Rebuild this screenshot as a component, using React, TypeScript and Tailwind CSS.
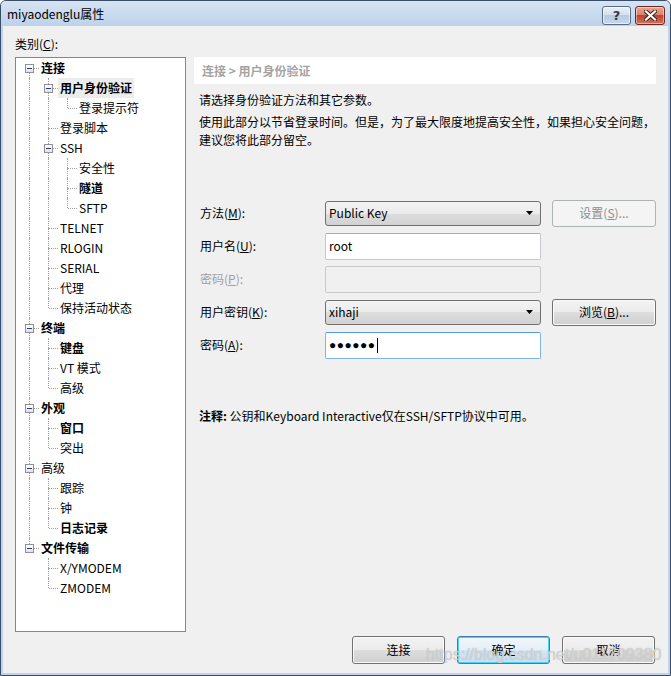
import React from "react";

type Row = { t: string; l: number; b?: boolean; c?: boolean; sel?: boolean };

const rows: Row[] = [
  { t: "连接", l: 0, b: true, c: true },
  { t: "用户身份验证", l: 1, b: true, c: true, sel: true },
  { t: "登录提示符", l: 2 },
  { t: "登录脚本", l: 1 },
  { t: "SSH", l: 1, c: true },
  { t: "安全性", l: 2 },
  { t: "隧道", l: 2, b: true },
  { t: "SFTP", l: 2 },
  { t: "TELNET", l: 1 },
  { t: "RLOGIN", l: 1 },
  { t: "SERIAL", l: 1 },
  { t: "代理", l: 1 },
  { t: "保持活动状态", l: 1 },
  { t: "终端", l: 0, b: true, c: true },
  { t: "键盘", l: 1, b: true },
  { t: "VT 模式", l: 1 },
  { t: "高级", l: 1 },
  { t: "外观", l: 0, b: true, c: true },
  { t: "窗口", l: 1, b: true },
  { t: "突出", l: 1 },
  { t: "高级", l: 0, c: true },
  { t: "跟踪", l: 1 },
  { t: "钟", l: 1 },
  { t: "日志记录", l: 1, b: true },
  { t: "文件传输", l: 0, b: true, c: true },
  { t: "X/YMODEM", l: 1 },
  { t: "ZMODEM", l: 1 },
];

function hasNext(i: number): boolean {
  const lv = rows[i].l;
  for (let j = i + 1; j < rows.length; j++) {
    if (rows[j].l < lv) return false;
    if (rows[j].l === lv) return true;
  }
  return false;
}

function ancestorContinues(i: number, lv: number): boolean {
  for (let j = i - 1; j >= 0; j--) {
    if (rows[j].l === lv) return hasNext(j);
  }
  return false;
}

const DOT = "border-dotted border-[#a0a0a0]";

function TreeRow({ r, i }: { r: Row; i: number }) {
  const cells = [];
  for (let lv = 0; lv <= r.l; lv++) {
    if (lv < r.l) {
      cells.push(
        <div key={lv} className="relative w-[19px] h-full shrink-0">
          {ancestorContinues(i, lv) && (
            <span className={`absolute left-[9px] top-0 h-full border-l ${DOT}`} />
          )}
        </div>
      );
    } else {
      const first = i === 0;
      const next = hasNext(i);
      cells.push(
        <div key={lv} className="relative w-[19px] h-full shrink-0">
          {!first && <span className={`absolute left-[9px] top-0 h-[10px] border-l ${DOT}`} />}
          {next && <span className={`absolute left-[9px] top-[10px] bottom-0 border-l ${DOT}`} />}
          <span className={`absolute left-[10px] right-0 top-[10px] h-0 border-t ${DOT}`} />
          {r.c && (
            <span className="absolute left-[5px] top-[6px] w-[9px] h-[9px] border border-[#919191] bg-[linear-gradient(to_bottom,#ffffff,#e2e2e2)]">
              <span className="absolute left-[1px] top-[3px] w-[5px] h-[1px] bg-[#1c3e8c]" />
            </span>
          )}
        </div>
      );
    }
  }
  return (
    <div className="flex h-[20px] items-stretch">
      {cells}
      <span
        className={`px-[2px] flex items-center whitespace-nowrap text-[12px] leading-[20px] text-black ${
          r.b ? "font-bold" : ""
        } ${r.sel ? "bg-[#ececec]" : ""}`}
      >
        {r.t}
      </span>
    </div>
  );
}

function Arrow() {
  return (
    <svg width="7" height="4" viewBox="0 0 7 4" className="absolute right-[7px] top-1/2 -translate-y-1/2">
      <path d="M0 0 H7 L3.5 4 Z" fill="#000" />
    </svg>
  );
}

const selectCls =
  "relative w-[216px] h-[25px] border border-[#707070] rounded-[3px] bg-[linear-gradient(to_bottom,#f3f3f3_0%,#ebebeb_50%,#dddddd_50%,#d2d2d2_100%)] flex items-center pl-[3px] text-[12px] text-black";
const btnCls =
  "w-[104px] h-[27px] border border-[#707070] rounded-[3px] bg-[linear-gradient(to_bottom,#f3f3f3_0%,#ebebeb_50%,#dddddd_50%,#d0d0d0_100%)] flex items-center justify-center text-[12px] text-black shadow-[inset_0_0_0_1px_#fcfcfc]";

export default function App() {
  return (
    <div className="w-[671px] h-[676px] font-['Noto_Sans_CJK_SC',sans-serif] bg-white">
      <div className="w-full h-full border border-[#3a4d66] rounded-t-[6px] bg-[#bfd4ec] flex flex-col overflow-hidden">
        {/* Title bar */}
        <div className="h-[25px] shrink-0 flex items-center justify-between pl-[6px] pr-[5px] bg-[linear-gradient(to_bottom,#d6e4f4,#bcd2ea)]">
          <span className="text-[12px] leading-[14px] text-black mt-[1px]">miyaodenglu属性</span>
          <div className="flex items-center gap-[4px] mt-[3px]">
            <div className="w-[29px] h-[19px] rounded-[3px] border border-[#5a6d87] bg-[linear-gradient(to_bottom,#eaf0f7_0%,#d3dfee_50%,#b8cbe3_50%,#c7d8ec_100%)] flex items-center justify-center shadow-[inset_0_0_0_1px_rgba(255,255,255,0.6)]">
              <span className="text-[13px] font-bold leading-[13px] text-[#2a3a55] font-['DejaVu_Sans',sans-serif]">?</span>
            </div>
            <div className="w-[30px] h-[19px] rounded-[3px] border border-[#6b2a22] bg-[linear-gradient(to_bottom,#e8a493_0%,#d9806c_50%,#c2402b_50%,#d0735f_100%)] flex items-center justify-center shadow-[inset_0_0_0_1px_rgba(255,255,255,0.45)]">
              <svg width="13" height="11" viewBox="0 0 13 11">
                <path d="M2 1.5 L11 9.5 M11 1.5 L2 9.5" stroke="#3b1b16" strokeWidth="4" strokeLinecap="square" />
                <path d="M2 1.5 L11 9.5 M11 1.5 L2 9.5" stroke="#ffffff" strokeWidth="2.2" strokeLinecap="square" />
              </svg>
            </div>
          </div>
        </div>
        {/* Frame body */}
        <div className="flex-1 px-[2px] pb-[2px] flex">
          <div className="flex-1 bg-[#f0f0f0] flex flex-col pl-[12px] pr-[11px] pt-[10px]">
            <div className="text-[12px] leading-[15px] text-black h-[15px]">
              类别(<span className="underline">C</span>):
            </div>
            <div className="flex mt-[6px] gap-[8px]">
              {/* Tree */}
              <div className="w-[171px] h-[575px] border border-[#828790] bg-white pl-[4px] overflow-hidden">
                {rows.map((r, i) => (
                  <TreeRow key={i} r={r} i={i} />
                ))}
              </div>
              {/* Right panel */}
              <div className="w-[462px] flex flex-col">
                <div className="h-[27px] bg-white flex items-center pl-[8px] text-[12px] font-bold text-[#a3a3a3]">
                  连接 &gt; 用户身份验证
                </div>
                <div className="pl-[5px] mt-[7px] text-[12px] leading-[18px] text-black whitespace-nowrap">
                  请选择身份验证方法和其它参数。
                </div>
                <div className="pl-[5px] mt-[4px] text-[12px] leading-[18px] text-black whitespace-nowrap">
                  使用此部分以节省登录时间。但是，为了最大限度地提高安全性，如果担心安全问题，
                  <br />
                  建议您将此部分留空。
                </div>
                {/* Form */}
                <div className="pl-[6px] mt-[49px] flex flex-col text-[12px] text-black">
                  <div className="h-[30px] flex items-center">
                    <div className="w-[125px]">
                      方法(<span className="underline">M</span>):
                    </div>
                    <div className={selectCls}>
                      Public Key
                      <Arrow />
                    </div>
                    <div className="ml-[11px] w-[104px] h-[27px] border border-[#adb2b5] rounded-[3px] bg-[#f4f4f4] flex items-center justify-center text-[#8d8d8d]">
                      设置(<span className="underline">S</span>)...
                    </div>
                  </div>
                  <div className="h-[36px] flex items-center">
                    <div className="w-[125px]">
                      用户名(<span className="underline">U</span>):
                    </div>
                    <div className="w-[216px] h-[27px] border border-[#c5c8cc] border-t-[#abadb3] rounded-[2px] bg-white flex items-center pl-[3px]">
                      root
                    </div>
                  </div>
                  <div className="h-[30px] flex items-center">
                    <div className="w-[125px] text-[#a0a0a0]">
                      密码(<span className="underline">P</span>):
                    </div>
                    <div className="w-[216px] h-[27px] border border-[#c9c9c9] rounded-[2px] bg-[#f0f0f0]" />
                  </div>
                  <div className="h-[36px] flex items-center">
                    <div className="w-[125px]">
                      用户密钥(<span className="underline">K</span>):
                    </div>
                    <div className={selectCls}>
                      xihaji
                      <Arrow />
                    </div>
                    <div className={`ml-[11px] ${btnCls}`}>
                      浏览(<span className="underline">B</span>)...
                    </div>
                  </div>
                  <div className="h-[30px] flex items-center">
                    <div className="w-[125px]">
                      密码(<span className="underline">A</span>):
                    </div>
                    <div className="w-[216px] h-[27px] border border-[#7eb4ea] border-t-[#569de5] rounded-[2px] bg-white flex items-center pl-[3px]">
                      <span className="font-['Liberation_Sans',sans-serif] text-[12px] leading-[14px] tracking-[0.5px]">●●●●●●</span>
                      <span className="w-[1px] h-[15px] bg-black ml-[1px]" />
                    </div>
                  </div>
                </div>
                <div className="pl-[5px] mt-[47px] text-[12px] leading-[18px] text-black whitespace-nowrap">
                  <span className="font-bold">注释:</span> 公钥和Keyboard Interactive仅在SSH/SFTP协议中可用。
                </div>
              </div>
            </div>
            {/* Bottom buttons */}
            <div className="relative mt-[4px] flex justify-end gap-[12px] pr-[2px]">
              <div className="w-[93px] h-[28px] border border-[#707070] rounded-[3px] bg-[linear-gradient(to_bottom,#f3f3f3_0%,#ebebeb_50%,#dddddd_50%,#d0d0d0_100%)] flex items-center justify-center text-[12px] text-black shadow-[inset_0_0_0_1px_#fcfcfc]">
                连接
              </div>
              <div className="w-[93px] h-[28px] border border-[#3c7fb1] rounded-[3px] bg-[linear-gradient(to_bottom,#f1f7fb_0%,#e5eff7_50%,#d4e6f3_50%,#c9dff0_100%)] flex items-center justify-center text-[12px] text-black shadow-[inset_0_0_0_1px_#48d0f8]">
                确定
              </div>
              <div className="w-[93px] h-[28px] border border-[#707070] rounded-[3px] bg-[linear-gradient(to_bottom,#f3f3f3_0%,#ebebeb_50%,#dddddd_50%,#d0d0d0_100%)] flex items-center justify-center text-[12px] text-black shadow-[inset_0_0_0_1px_#fcfcfc]">
                取消
              </div>
              <div className="absolute left-[411px] top-[10px] font-['Liberation_Sans',sans-serif] text-[16px] leading-[18px] text-[rgba(215,215,215,0.85)] whitespace-nowrap [text-shadow:0_0_1px_rgba(150,150,150,0.6)] pointer-events-none">
                https://blog.csdn.net/u011709380
              </div>
            </div>
          </div>
        </div>
      </div>
    </div>
  );
}
